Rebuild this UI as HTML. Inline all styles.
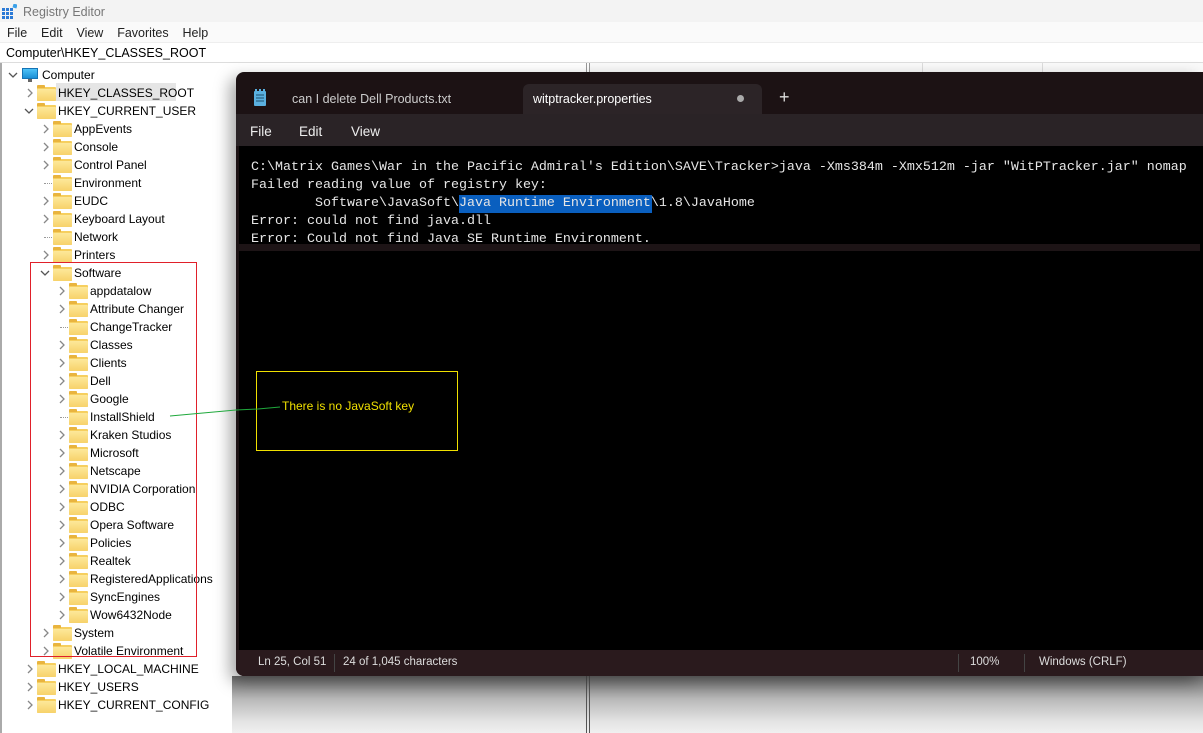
<!DOCTYPE html>
<html><head><meta charset="utf-8"><style>
*{margin:0;padding:0;box-sizing:border-box}
body{width:1203px;height:733px;overflow:hidden;background:#fff;font-family:"Liberation Sans",sans-serif;position:relative;color:#000}
.abs{position:absolute}
.row{position:absolute;height:18px;font-size:12px;line-height:18px;white-space:nowrap}
.fold{position:absolute;top:3px;width:19px;height:14px;background:#f6cf5f;border-radius:1px}
.fold:before{content:"";position:absolute;left:0;top:-2px;width:8px;height:3px;background:#e9b43e;border-radius:1px 1px 0 0}
.fold:after{content:"";position:absolute;left:0;top:2px;width:19px;height:12px;background:linear-gradient(#fde89a,#f7d26a);border-radius:1px}
.arr{position:absolute;top:4px}
.mono{font-family:"Liberation Mono",monospace;font-size:13.33px;color:#e6e6e6;position:absolute;left:251px;white-space:pre;line-height:18px}
</style></head><body>
<div class="abs" style="left:0;top:0;width:1203px;height:22px;background:#f3f3f3"></div>
<svg class="abs" style="left:2px;top:4px" width="15" height="15" viewBox="0 0 15 15"><g fill="#2b7ad6"><rect x="0" y="4" width="3" height="3"/><rect x="4" y="4" width="3" height="3"/><rect x="8" y="4" width="3" height="3"/><rect x="0" y="8" width="3" height="3"/><rect x="4" y="8" width="3" height="3"/><rect x="8" y="8" width="3" height="3"/><rect x="0" y="12" width="3" height="3"/><rect x="4" y="12" width="3" height="3"/><rect x="8" y="12" width="3" height="3"/></g><rect x="11" y="0" width="4" height="4" fill="#3aa0e8" transform="rotate(15 13 2)"/></svg>
<div class="abs" style="left:23px;top:5px;font-size:12.5px;color:#777">Registry Editor</div>
<div class="abs" style="left:0;top:22px;width:1203px;height:20px;background:#fafafa"></div>
<div class="abs" style="left:7px;top:26px;font-size:12.5px;color:#222">File&nbsp;&nbsp;&nbsp; Edit&nbsp;&nbsp;&nbsp; View&nbsp;&nbsp;&nbsp; Favorites&nbsp;&nbsp;&nbsp; Help</div>
<div class="abs" style="left:0;top:42px;width:1203px;height:21px;background:#fff;border-top:1px solid #eee;border-bottom:1px solid #ddd"></div>
<div class="abs" style="left:6px;top:46px;font-size:12.5px">Computer\HKEY_CLASSES_ROOT</div>
<div class="abs" style="left:0;top:63px;width:2px;height:670px;background:#aaa"></div>
<div class="abs" style="left:586px;top:63px;width:1px;height:670px;background:#999"></div>
<div class="abs" style="left:589px;top:63px;width:1px;height:670px;background:#999"></div>
<div class="abs" style="left:590px;top:63px;width:613px;height:10px;background:#fafafa;border-bottom:1px solid #ddd"></div>
<div class="abs" style="left:922px;top:63px;width:1px;height:10px;background:#ddd"></div>
<div class="abs" style="left:1042px;top:63px;width:1px;height:10px;background:#ddd"></div>
<div class="abs" style="left:56px;top:83px;width:120px;height:18px;background:#e5e5e5"></div>
<div id="tree"></div>
<script>
var d=[[0,'d','Computer'],[1,'r','HKEY_CLASSES_ROOT'],[1,'d','HKEY_CURRENT_USER'],[2,'r','AppEvents'],[2,'r','Console'],[2,'r','Control Panel'],[2,'n','Environment'],[2,'r','EUDC'],[2,'r','Keyboard Layout'],[2,'n','Network'],[2,'r','Printers'],[2,'d','Software'],
[3,'r','appdatalow'],[3,'r','Attribute Changer'],[3,'n','ChangeTracker'],[3,'r','Classes'],[3,'r','Clients'],[3,'r','Dell'],[3,'r','Google'],[3,'n','InstallShield'],[3,'r','Kraken Studios'],[3,'r','Microsoft'],[3,'r','Netscape'],[3,'r','NVIDIA Corporation'],[3,'r','ODBC'],[3,'r','Opera Software'],[3,'r','Policies'],[3,'r','Realtek'],[3,'r','RegisteredApplications'],[3,'r','SyncEngines'],[3,'r','Wow6432Node'],
[2,'r','System'],[2,'r','Volatile Environment'],[1,'r','HKEY_LOCAL_MACHINE'],[1,'r','HKEY_USERS'],[1,'r','HKEY_CURRENT_CONFIG']];
var h='';
d.forEach(function(r,i){var L=r[0],t=66+18*i,ax=8+16*L,fx=21+16*L,tx=42+16*L;
h+='<div class="row" style="left:0;top:'+t+'px;width:240px">';
if(r[1]=='d')h+='<svg class="arr" style="left:'+ax+'px" width="10" height="10"><polyline points="1,3 5,7 9,3" fill="none" stroke="#555" stroke-width="1.3"/></svg>';
else if(r[1]=='r')h+='<svg class="arr" style="left:'+(ax+1)+'px" width="10" height="10"><polyline points="3,1 7,5 3,9" fill="none" stroke="#888" stroke-width="1.3"/></svg>';
else h+='<span style="position:absolute;left:'+(ax+4)+'px;top:9px;width:8px;border-top:1px dotted #999"></span>';
if(L==0)h+='<span style="position:absolute;left:22px;top:2px;width:16px;height:11px;background:linear-gradient(#4fc3f7,#1a8fd6);border:1px solid #1573b5"></span><span style="position:absolute;left:28px;top:13px;width:4px;height:3px;background:#666"></span>';
else h+='<span class="fold" style="left:'+fx+'px"></span>';
h+='<span style="position:absolute;left:'+tx+'px">'+r[2]+'</span></div>';});
document.getElementById('tree').innerHTML=h;
</script>
<div class="abs" style="left:30px;top:262px;width:167px;height:395px;border:1px solid #e0202a"></div>
<div class="abs" style="left:232px;top:676px;width:971px;height:57px;background:linear-gradient(#6e6e6e,#b8b8b8 40%,#e4e4e4 80%,#f0f0f0)"></div>
<div class="abs" style="left:586px;top:676px;width:1px;height:57px;background:#555"></div>
<div class="abs" style="left:589px;top:676px;width:1px;height:57px;background:#555"></div>
<div class="abs" style="left:236px;top:72px;width:967px;height:604px;background:#1c1214;border-radius:8px 0 0 8px;box-shadow:-6px 6px 16px rgba(0,0,0,.35)"></div>
<div class="abs" style="left:523px;top:84px;width:239px;height:30px;background:#2c2427;border-radius:6px 6px 0 0"></div>
<div class="abs" style="left:236px;top:114px;width:967px;height:32px;background:#2a2326"></div>
<svg class="abs" style="left:253px;top:89px" width="14" height="18" viewBox="0 0 14 18"><rect x="1" y="2" width="12" height="15" rx="1" fill="#5ab0e0"/><g stroke="#1d4f6e" stroke-width="1"><line x1="3" y1="6" x2="11" y2="6"/><line x1="3" y1="9" x2="11" y2="9"/><line x1="3" y1="12" x2="11" y2="12"/></g><g fill="#5ab0e0"><rect x="2" y="0" width="2" height="3"/><rect x="6" y="0" width="2" height="3"/><rect x="10" y="0" width="2" height="3"/></g></svg>
<div class="abs" style="left:292px;top:92px;font-size:12.5px;color:#ccc">can I delete Dell Products.txt</div>
<div class="abs" style="left:533px;top:92px;font-size:12.5px;color:#fff">witptracker.properties</div>
<div class="abs" style="left:737px;top:95px;width:7px;height:7px;border-radius:50%;background:#aaa"></div>
<div class="abs" style="left:779px;top:87px;font-size:18px;color:#ddd">+</div>
<div class="abs" style="left:250px;top:124px;font-size:13.5px;color:#eee">File</div>
<div class="abs" style="left:299px;top:124px;font-size:13.5px;color:#eee">Edit</div>
<div class="abs" style="left:351px;top:124px;font-size:13.5px;color:#eee">View</div>
<div class="abs" style="left:239px;top:146px;width:964px;height:504px;background:#000"></div>
<div class="abs" style="left:239px;top:244px;width:961px;height:7px;background:#1d1416"></div>
<div class="abs" style="left:459px;top:195px;width:193px;height:18px;background:#0a5fbf"></div>
<div class="mono" style="top:159px">C:\Matrix Games\War in the Pacific Admiral's Edition\SAVE\Tracker&gt;java -Xms384m -Xmx512m -jar "WitPTracker.jar" nomap
Failed reading value of registry key:
        Software\JavaSoft\Java Runtime Environment\1.8\JavaHome
Error: could not find java.dll
Error: Could not find Java SE Runtime Environment.</div>
<div class="abs" style="left:236px;top:650px;width:967px;height:26px;background:#2a1a1d;border-radius:0 0 0 8px"></div>
<div class="abs" style="left:258px;top:656px;font-size:11.5px;color:#ddd">Ln 25, Col 51</div>
<div class="abs" style="left:334px;top:654px;width:1px;height:18px;background:#444"></div>
<div class="abs" style="left:343px;top:656px;font-size:11.5px;color:#ddd">24 of 1,045 characters</div>
<div class="abs" style="left:958px;top:654px;width:1px;height:18px;background:#444"></div>
<div class="abs" style="left:970px;top:656px;font-size:11.5px;color:#ddd">100%</div>
<div class="abs" style="left:1024px;top:654px;width:1px;height:18px;background:#444"></div>
<div class="abs" style="left:1039px;top:656px;font-size:11.5px;color:#ddd">Windows (CRLF)</div>
<div class="abs" style="left:256px;top:371px;width:202px;height:80px;border:1px solid #f0e000"></div>
<div class="abs" style="left:282px;top:399px;font-size:12px;color:#f0e000">There is no JavaSoft key</div>
<svg class="abs" style="left:0;top:0" width="1203" height="733"><polyline points="170,416 236,410 258,409 280,407" fill="none" stroke="#1fa83c" stroke-width="1"/></svg>
</body></html>
